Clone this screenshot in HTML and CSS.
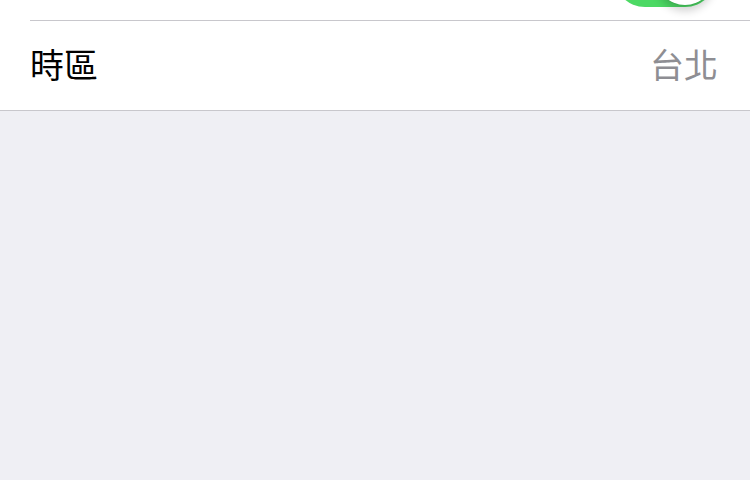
FILE: index.html
```html
<!DOCTYPE html>
<html>
<head>
<meta name="viewport" content="width=device-width, initial-scale=1">
<link rel="stylesheet" href="styles.css">
</head>
<body>

<div class="group">
    <div class="cell cell-top">
        <span class="label"></span>
        <div class="switch on"><div class="knob"></div></div>
    </div>
    <div class="cell">
        <span class="label">時區</span>
        <span class="value">台北</span>
    </div>
</div>

</body>
</html>
```

FILE: styles.css
```css
body {
  margin: 0;
  background: #efeff4;
  font-family: "Noto Sans CJK TC", "Noto Sans", sans-serif;
  overflow: hidden;
}

/* White grouped table section */
.group {
  background: #fff;
  margin-top: -68px;
  padding-left: 30px;
  border-bottom: 1px solid #c8c7cc;
}

.cell {
  height: 88px;
  display: flex;
  align-items: center;
  justify-content: space-between;
  padding-right: 32px;
}

.cell + .cell {
  border-top: 1px solid #c8c7cc;
  height: 90px;
  padding-bottom: 4px;
  box-sizing: border-box;
}

.cell-top {
  padding-right: 34px;
}

.label {
  font-size: 34px;
  color: #000;
}

.value {
  font-size: 34px;
  color: #8e8e93;
}

/* iOS style toggle */
.switch {
  width: 102px;
  height: 62px;
  border-radius: 31px;
  background: #4cd964;
  position: relative;
}

.switch .knob {
  position: absolute;
  top: 2px;
  right: 2px;
  width: 58px;
  height: 58px;
  border-radius: 50%;
  background: #fff;
  box-shadow: 0 6px 8px rgba(0, 0, 0, 0.18), 0 0 0 1px rgba(0, 0, 0, 0.04);
}
```
